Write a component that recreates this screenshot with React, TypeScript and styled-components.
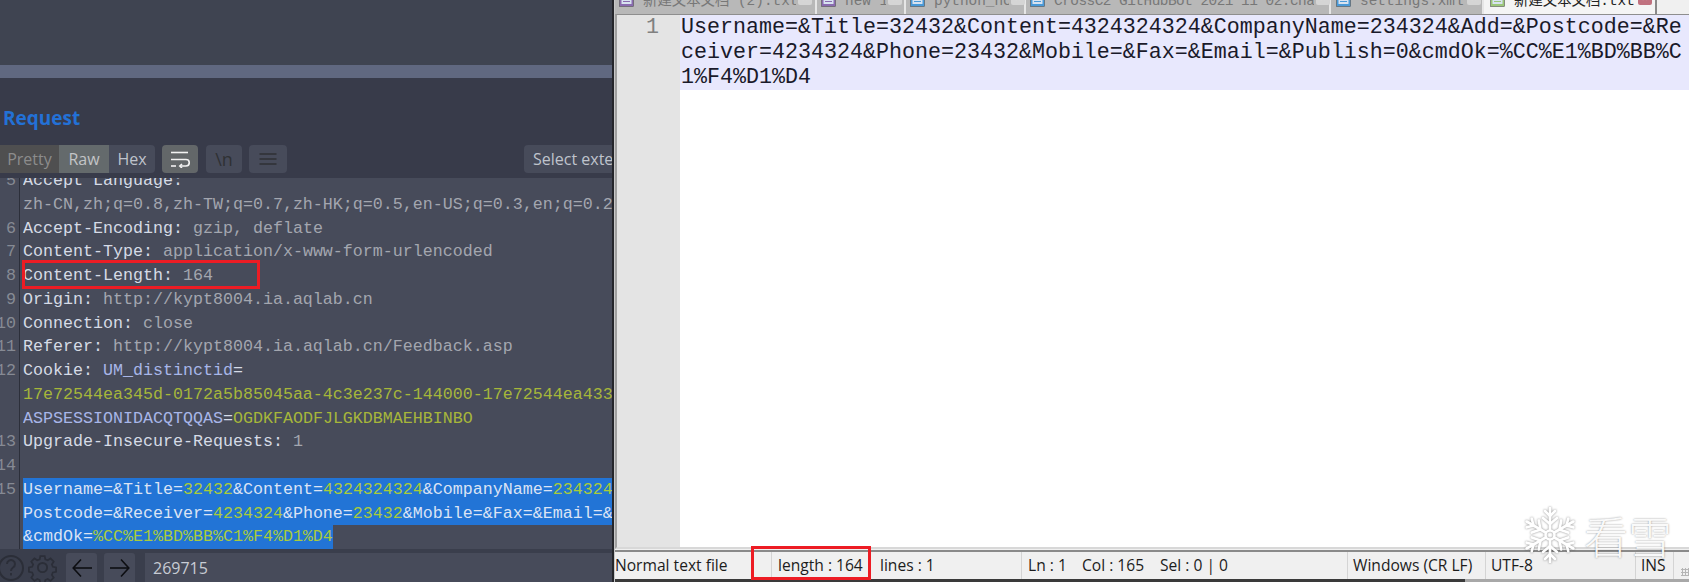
import React from "react";
import styled, { createGlobalStyle } from "styled-components";

const GlobalStyle = createGlobalStyle`
  html, body { margin: 0; padding: 0; background: #fff; }
  #root { width: 1689px; height: 582px; }
`;

const uiFont = `"Open Sans", "Noto Sans", "Liberation Sans", sans-serif`;
const monoFont = `"Liberation Mono", "Noto Sans CJK SC", monospace`;

const Page = styled.div`
  position: relative;
  display: flex;
  width: 1689px;
  height: 582px;
  overflow: hidden;
`;

/* ---------- left: Burp request panel ---------- */

const BurpPanel = styled.section`
  display: flex;
  flex-direction: column;
  width: 612px;
  flex: none;
  overflow: hidden;
  background: #383b4a;
`;

const TopArea = styled.div`
  height: 65px;
  flex: none;
  background: #3f4451;
`;

const SplitBand = styled.div`
  height: 13px;
  flex: none;
  background: #606880;
`;

const RequestTitle = styled.h2`
  margin: 0;
  padding: 28px 0 0 3px;
  height: 39px;
  flex: none;
  box-sizing: content-box;
  font: 700 19px/24px ${uiFont};
  color: #2371d6;
`;

const ToolRow = styled.div`
  display: flex;
  align-items: stretch;
  height: 28px;
  flex: none;
  margin-bottom: 5px;
`;

const ModeGroup = styled.div`
  display: flex;
  border-radius: 0 4px 4px 0;
  overflow: hidden;
`;

const ModeTab = styled.div<{ $bg: string; $fg: string; $w: number }>`
  display: flex;
  align-items: center;
  justify-content: center;
  width: ${(p) => p.$w}px;
  background: ${(p) => p.$bg};
  color: ${(p) => p.$fg};
  font: 400 16px/1 ${uiFont};
`;

const ToolButton = styled.div<{ $active?: boolean; $gap: number; $w: number }>`
  display: flex;
  align-items: center;
  justify-content: center;
  width: ${(p) => p.$w}px;
  margin-left: ${(p) => p.$gap}px;
  border-radius: 4px;
  background: ${(p) => (p.$active ? "#636769" : "#474b5a")};
  color: #2f3134;
  font: 400 18px/1 ${uiFont};
`;

const SelectBox = styled.div`
  display: flex;
  align-items: center;
  margin-left: auto;
  width: 88px;
  padding-left: 9px;
  box-sizing: border-box;
  border-radius: 4px 0 0 4px;
  background: #474b5a;
  color: #bfc3cc;
  font: 400 16px/1 ${uiFont};
  white-space: nowrap;
  overflow: hidden;
`;

const CodeArea = styled.div`
  height: 371px;
  flex: none;
  overflow: hidden;
  background: #474b5a;
`;

const CodeInner = styled.div`
  margin-top: -9px;
`;

const CodeRow = styled.div`
  display: flex;
  height: 23.75px;
`;

const LineNo = styled.div`
  display: flex;
  justify-content: flex-end;
  flex: none;
  width: 20px;
  padding-right: 3px;
  box-sizing: border-box;
  border-right: 1px solid #2c2f3a;
  margin-right: 3px;
  color: #868a94;
  font: 400 16.67px/23.75px ${monoFont};
  white-space: nowrap;
`;

const LineText = styled.div<{ $selected?: boolean; $fit?: boolean }>`
  ${(p) => (p.$fit ? "" : "flex: 1;")}
  min-width: 0;
  background: ${(p) => (p.$selected ? "#2274d6" : "transparent")};
  font: 400 16.67px/23.75px ${monoFont};
  white-space: pre;
  overflow: hidden;
`;

const tokenColors = {
  k: "#d6dbe6",
  v: "#a3a6af",
  n: "#a8b6e8",
  y: "#a6b63a",
  sk: "#dbe3f4",
  sy: "#a9cb3c",
};

type TokenKind = keyof typeof tokenColors;

const Token = styled.span<{ $kind: TokenKind }>`
  color: ${(p) => tokenColors[p.$kind]};
`;

const BottomBar = styled.div`
  display: flex;
  align-items: flex-end;
  flex: 1;
  background: #3a3e4c;
`;

const NavButton = styled.div<{ $gap: number }>`
  display: flex;
  align-items: center;
  justify-content: center;
  flex: none;
  width: 31px;
  height: 29px;
  margin-left: ${(p) => p.$gap}px;
  border-radius: 3px 3px 0 0;
  background: #474b5a;
`;

const SearchInput = styled.div`
  display: flex;
  align-items: center;
  flex: 1;
  height: 29px;
  margin-left: 10px;
  padding-left: 8px;
  background: #474b5a;
  color: #c8ccd4;
  font: 400 16px/1 ${uiFont};
`;

const Seam = styled.div`
  width: 3px;
  flex: none;
  background: #25262b;
  border-right: 1px solid #c8c8c8;
  box-sizing: border-box;
`;

/* ---------- right: Notepad++ ---------- */

const NotepadPanel = styled.section`
  display: flex;
  flex-direction: column;
  flex: 1;
  min-width: 0;
  background: #f0f0f0;
`;

const TabBar = styled.div`
  display: flex;
  height: 14px;
  flex: none;
  overflow: hidden;
  background: #f0f0f0;
`;

const Tab = styled.div<{ $w: number; $active?: boolean; $pad: number }>`
  display: flex;
  align-items: flex-end;
  width: ${(p) => p.$w}px;
  height: 14px;
  flex: none;
  box-sizing: border-box;
  padding: 0 0 7px ${(p) => p.$pad}px;
  border-right: 2px solid ${(p) => (p.$active ? "#8a8a8a" : "#e6e6e6")};
  background: ${(p) => (p.$active ? "#f4f4f4" : "#b8b8b8")};
`;

const TabLabel = styled.span<{ $active?: boolean; $w: number; $track?: number }>`
  width: ${(p) => p.$w}px;
  margin: 0 0 -2px 9px;
  flex: none;
  color: ${(p) => (p.$active ? "#222" : "#777")};
  font: 400 14.4px/16px ${monoFont};
  letter-spacing: ${(p) => p.$track ?? 0}px;
  white-space: pre;
  overflow: hidden;
`;

const TabClose = styled.span<{ $active?: boolean }>`
  display: flex;
  align-items: center;
  justify-content: center;
  width: 14px;
  height: 14px;
  margin: 0 0 2px 2px;
  flex: none;
  border-radius: 2px;
  background: ${(p) => (p.$active ? "#c0717f" : "#d5d5d5")};
  color: #fff;
  font: 700 12px/1 ${uiFont};
`;

const Editor = styled.div`
  display: flex;
  flex: 1;
  min-height: 0;
  background: #fff;
  border-top: 1px solid #8e8e8e;
  border-left: 2px solid #a0a0a0;
  border-bottom: 2px solid #d8d8d8;
  margin-bottom: 1px;
`;

const EditorGutter = styled.div`
  width: 63px;
  flex: none;
  box-sizing: border-box;
  padding-right: 21px;
  background: #e4e4e4;
  color: #808080;
  text-align: right;
  font: 400 21.67px/25px ${monoFont};
`;

const EditorBody = styled.div`
  flex: 1;
  min-width: 0;
`;

const EditorText = styled.div`
  padding-left: 1px;
  background: #e8e8fd;
  color: #1a1a2a;
  font: 400 21.67px/25px ${monoFont};
  white-space: pre;
  overflow: hidden;
`;

const StatusBar = styled.footer`
  display: flex;
  align-items: center;
  height: 29px;
  flex: none;
  border-top: 2px solid #8a8a8a;
  box-sizing: border-box;
  background: #f0f0f0;
  color: #1c1c1c;
  font: 400 15.6px/1 ${uiFont};
`;

const StatusEdge = styled.div`
  height: 3px;
  flex: none;
  background: linear-gradient(to right, #3a3a3a 850px, #a8a8a8 850px);
`;

const StatusCell = styled.div<{ $w: number; $pad?: number }>`
  display: flex;
  align-items: center;
  height: 100%;
  width: ${(p) => p.$w}px;
  flex: none;
  box-sizing: border-box;
  padding-left: ${(p) => p.$pad ?? 5}px;
  border-right: 1px solid #d4d4d4;
  white-space: pre;
`;

const StatusPiece = styled.span<{ $w: number }>`
  width: ${(p) => p.$w}px;
  flex: none;
`;

const SizeGrip = styled.div`
  width: 8px;
  height: 8px;
  margin: 12px 0 0 7px;
  flex: none;
  background: radial-gradient(circle, #b5b5b5 1px, transparent 1.2px) 0 0 / 3px 3px;
`;

/* ---------- things lying over the shot ---------- */

const RedBox = styled.div<{ $x: number; $y: number; $w: number; $h: number }>`
  position: absolute;
  left: ${(p) => p.$x}px;
  top: ${(p) => p.$y}px;
  width: ${(p) => p.$w}px;
  height: ${(p) => p.$h}px;
  box-sizing: border-box;
  border: 3px solid #ed1c24;
`;

const Watermark = styled.div`
  position: absolute;
  left: 1525px;
  top: 507px;
  display: flex;
  align-items: center;
  gap: 9px;
`;

const WatermarkText = styled.span`
  color: rgba(255, 255, 255, 0.95);
  font: 300 44px/56px "Noto Sans CJK SC", sans-serif;
  text-shadow: 0 0 2px rgba(0, 0, 0, 0.45);
`;

/* ---------- drawings ---------- */

const TabIcon = ({ color }: { color: string }) => (
  <svg width="15" height="16" viewBox="0 0 15 16" style={{ flex: "none" }}>
    <rect x="0.5" y="0.5" width="14" height="15" fill={color} stroke="#555" strokeWidth="0.6" />
    <rect x="2.5" y="5" width="10" height="8" fill="#d7e2f0" />
    <rect x="4" y="7" width="7" height="1" fill={color} />
    <rect x="4" y="10" width="7" height="1" fill={color} />
  </svg>
);

const WrapIcon = () => (
  <svg width="20" height="17" viewBox="0 0 20 17" fill="none" stroke="#f2f2f2" strokeWidth="1.6">
    <path d="M1 1.5h17" />
    <path d="M1 8.5h15a3 3 0 0 1 0 6.5H10" />
    <path d="M12 13l-2.2 2 2.2 2" />
    <path d="M1 15h5" />
  </svg>
);

const MenuIcon = () => (
  <svg width="18" height="12" viewBox="0 0 18 12" fill="none" stroke="#2f3134" strokeWidth="1.4">
    <path d="M0.5 1h17M0.5 6h17M0.5 11h17" />
  </svg>
);

const HelpIcon = () => (
  <svg width="26" height="29" viewBox="0 0 26 29" fill="none" stroke="#2b2e38" strokeWidth="2" style={{ marginLeft: -2, flex: "none" }}>
    <circle cx="13" cy="15" r="12" />
    <path d="M9 11a4 4 0 1 1 6 3.5c-1.5 1-2 1.8-2 3.5" />
    <path d="M13 20v2.5" />
  </svg>
);

const GearIcon = () => (
  <svg width="29" height="29" viewBox="0 0 24 24" fill="none" stroke="#2b2e38" strokeWidth="1.6" style={{ marginLeft: 4, flex: "none" }}>
    <circle cx="12" cy="12" r="3.8" />
    <path d="M10 1.5h4l.6 3 2.2.9 2.6-1.7 2.9 2.9-1.7 2.6.9 2.2 3 .6v4l-3 .6-.9 2.2 1.7 2.6-2.9 2.9-2.6-1.7-2.2.9-.6 3h-4l-.6-3-2.2-.9-2.6 1.7-2.9-2.9 1.7-2.6-.9-2.2-3-.6v-4l3-.6.9-2.2-1.7-2.6 2.9-2.9 2.6 1.7 2.2-.9z" transform="translate(1.2 1.2) scale(.9)" />
  </svg>
);

const ArrowIcon = ({ flip }: { flip?: boolean }) => (
  <svg width="20" height="20" viewBox="0 0 20 20" fill="none" stroke="#0d0e12" strokeWidth="1.6" style={flip ? { transform: "scaleX(-1)" } : undefined}>
    <path d="M1 10h19" />
    <path d="M9 1.5L1.2 10 9 18.5" />
  </svg>
);

const Snowflake = () => (
  <svg width="50" height="56" viewBox="-25 -28 50 56" fill="none" stroke="#fff" strokeWidth="2.6" strokeLinecap="round" style={{ filter: "drop-shadow(0 0 1px rgba(0,0,0,.45))" }}>
    {[0, 60, 120, 180, 240, 300].map((a) => (
      <g key={a} transform={`rotate(${a})`}>
        <path d="M0-5V-27" />
        <path d="M0-11l-7-6M0-11l7-6" />
        <path d="M0-19l-5-5M0-19l5-5" />
      </g>
    ))}
    <circle r="4.5" />
  </svg>
);

/* ---------- data ---------- */

type Line = { no?: string; parts: [string, TokenKind][]; selected?: boolean; fit?: boolean };

const codeLines: Line[] = [
  { no: "5", parts: [["Accept Language:", "k"]] },
  { parts: [["zh-CN,zh;q=0.8,zh-TW;q=0.7,zh-HK;q=0.5,en-US;q=0.3,en;q=0.2", "v"]] },
  { no: "6", parts: [["Accept-Encoding:", "k"], [" gzip, deflate", "v"]] },
  { no: "7", parts: [["Content-Type:", "k"], [" application/x-www-form-urlencoded", "v"]] },
  { no: "8", parts: [["Content-Length:", "k"], [" 164", "v"]] },
  { no: "9", parts: [["Origin:", "k"], [" http://kypt8004.ia.aqlab.cn", "v"]] },
  { no: "10", parts: [["Connection:", "k"], [" close", "v"]] },
  { no: "11", parts: [["Referer:", "k"], [" http://kypt8004.ia.aqlab.cn/Feedback.asp", "v"]] },
  { no: "12", parts: [["Cookie: ", "k"], ["UM_distinctid", "n"], ["=", "k"]] },
  { parts: [["17e72544ea345d-0172a5b85045aa-4c3e237c-144000-17e72544ea433", "y"]] },
  { parts: [["ASPSESSIONIDACQTQQAS", "n"], ["=", "k"], ["OGDKFAODFJLGKDBMAEHBINBO", "y"]] },
  { no: "13", parts: [["Upgrade-Insecure-Requests:", "k"], [" 1", "v"]] },
  { no: "14", parts: [] },
  {
    no: "15",
    selected: true,
    parts: [
      ["Username=&Title=", "sk"],
      ["32432", "sy"],
      ["&Content=", "sk"],
      ["4324324324", "sy"],
      ["&CompanyName=", "sk"],
      ["234324", "sy"],
      ["&Add=&", "sk"],
    ],
  },
  {
    selected: true,
    parts: [
      ["Postcode=&Receiver=", "sk"],
      ["4234324", "sy"],
      ["&Phone=", "sk"],
      ["23432", "sy"],
      ["&Mobile=&Fax=&Email=&", "sk"],
    ],
  },
  { selected: true, fit: true, parts: [["&cmdOk=", "sk"], ["%CC%E1%BD%BB%C1%F4%D1%D4", "sy"]] },
];

const tabs = [
  { name: "新建文本文档 (2).txt", icon: "#8a6bb0", w: 202, pad: 4, label: 153 },
  { name: "new 1", icon: "#8a6bb0", w: 89, pad: 4, label: 41 },
  { name: "python_hc", icon: "#4a9ad8", w: 120, pad: 4, label: 75 },
  { name: "CrossC2 GitHubBot 2021 11 02.cna", icon: "#4a9ad8", w: 305, pad: 4, label: 260, track: -0.5 },
  { name: "settings.xml", icon: "#4a9ad8", w: 153, pad: 5, label: 105 },
  { name: "新建文本文档.txt", icon: "#9cc77a", w: 173, pad: 6, label: 122, active: true },
];

const editorLines = [
  "Username=&Title=32432&Content=4324324324&CompanyName=234324&Add=&Postcode=&Re",
  "ceiver=4234324&Phone=23432&Mobile=&Fax=&Email=&Publish=0&cmdOk=%CC%E1%BD%BB%C",
  "1%F4%D1%D4",
];

export default function App() {
  return (
    <Page>
      <GlobalStyle />
      <BurpPanel>
        <TopArea />
        <SplitBand />
        <RequestTitle>Request</RequestTitle>
        <ToolRow>
          <ModeGroup>
            <ModeTab $bg="#4f4f50" $fg="#8c8c8c" $w={59}>Pretty</ModeTab>
            <ModeTab $bg="#646a6c" $fg="#c2c4c6" $w={50}>Raw</ModeTab>
            <ModeTab $bg="#474b5a" $fg="#bfc3cc" $w={46}>Hex</ModeTab>
          </ModeGroup>
          <ToolButton $active $gap={7} $w={36}><WrapIcon /></ToolButton>
          <ToolButton $gap={8} $w={36}>\n</ToolButton>
          <ToolButton $gap={7} $w={38}><MenuIcon /></ToolButton>
          <SelectBox>Select extension...</SelectBox>
        </ToolRow>
        <CodeArea>
          <CodeInner>
            {codeLines.map((line, i) => (
              <CodeRow key={i}>
                <LineNo>{line.no}</LineNo>
                <LineText $selected={line.selected} $fit={line.fit}>
                  {line.parts.map(([text, kind], j) => (
                    <Token key={j} $kind={kind}>{text}</Token>
                  ))}
                </LineText>
              </CodeRow>
            ))}
          </CodeInner>
        </CodeArea>
        <BottomBar>
          <HelpIcon />
          <GearIcon />
          <NavButton $gap={9}><ArrowIcon /></NavButton>
          <NavButton $gap={7}><ArrowIcon flip /></NavButton>
          <SearchInput>269715</SearchInput>
        </BottomBar>
      </BurpPanel>
      <Seam />
      <NotepadPanel>
        <TabBar>
          {tabs.map((tab) => (
            <Tab key={tab.name} $w={tab.w} $pad={tab.pad} $active={tab.active}>
              <TabIcon color={tab.icon} />
              <TabLabel $active={tab.active} $w={tab.label} $track={tab.track}>{tab.name}</TabLabel>
              <TabClose $active={tab.active}>×</TabClose>
            </Tab>
          ))}
        </TabBar>
        <Editor>
          <EditorGutter>1</EditorGutter>
          <EditorBody>
            <EditorText>
              {editorLines.map((line) => (
                <div key={line}>{line}</div>
              ))}
            </EditorText>
          </EditorBody>
        </Editor>
        <StatusBar>
          <StatusCell $w={157} $pad={0}>Normal text file</StatusCell>
          <StatusCell $w={250} $pad={6}>
            <StatusPiece $w={102}>length : 164</StatusPiece>
            <span>lines : 1</span>
          </StatusCell>
          <StatusCell $w={326} $pad={6}>
            <StatusPiece $w={54}>Ln : 1</StatusPiece>
            <StatusPiece $w={78}>Col : 165</StatusPiece>
            <span>Sel : 0 | 0</span>
          </StatusCell>
          <StatusCell $w={138}>Windows (CR LF)</StatusCell>
          <StatusCell $w={150}>UTF-8</StatusCell>
          <StatusCell $w={38}>INS</StatusCell>
          <SizeGrip />
        </StatusBar>
        <StatusEdge />
      </NotepadPanel>
      <RedBox $x={22} $y={260} $w={238} $h={29} />
      <RedBox $x={751} $y={546} $w={120} $h={34} />
      <Watermark>
        <Snowflake />
        <WatermarkText>看雪</WatermarkText>
      </Watermark>
    </Page>
  );
}
